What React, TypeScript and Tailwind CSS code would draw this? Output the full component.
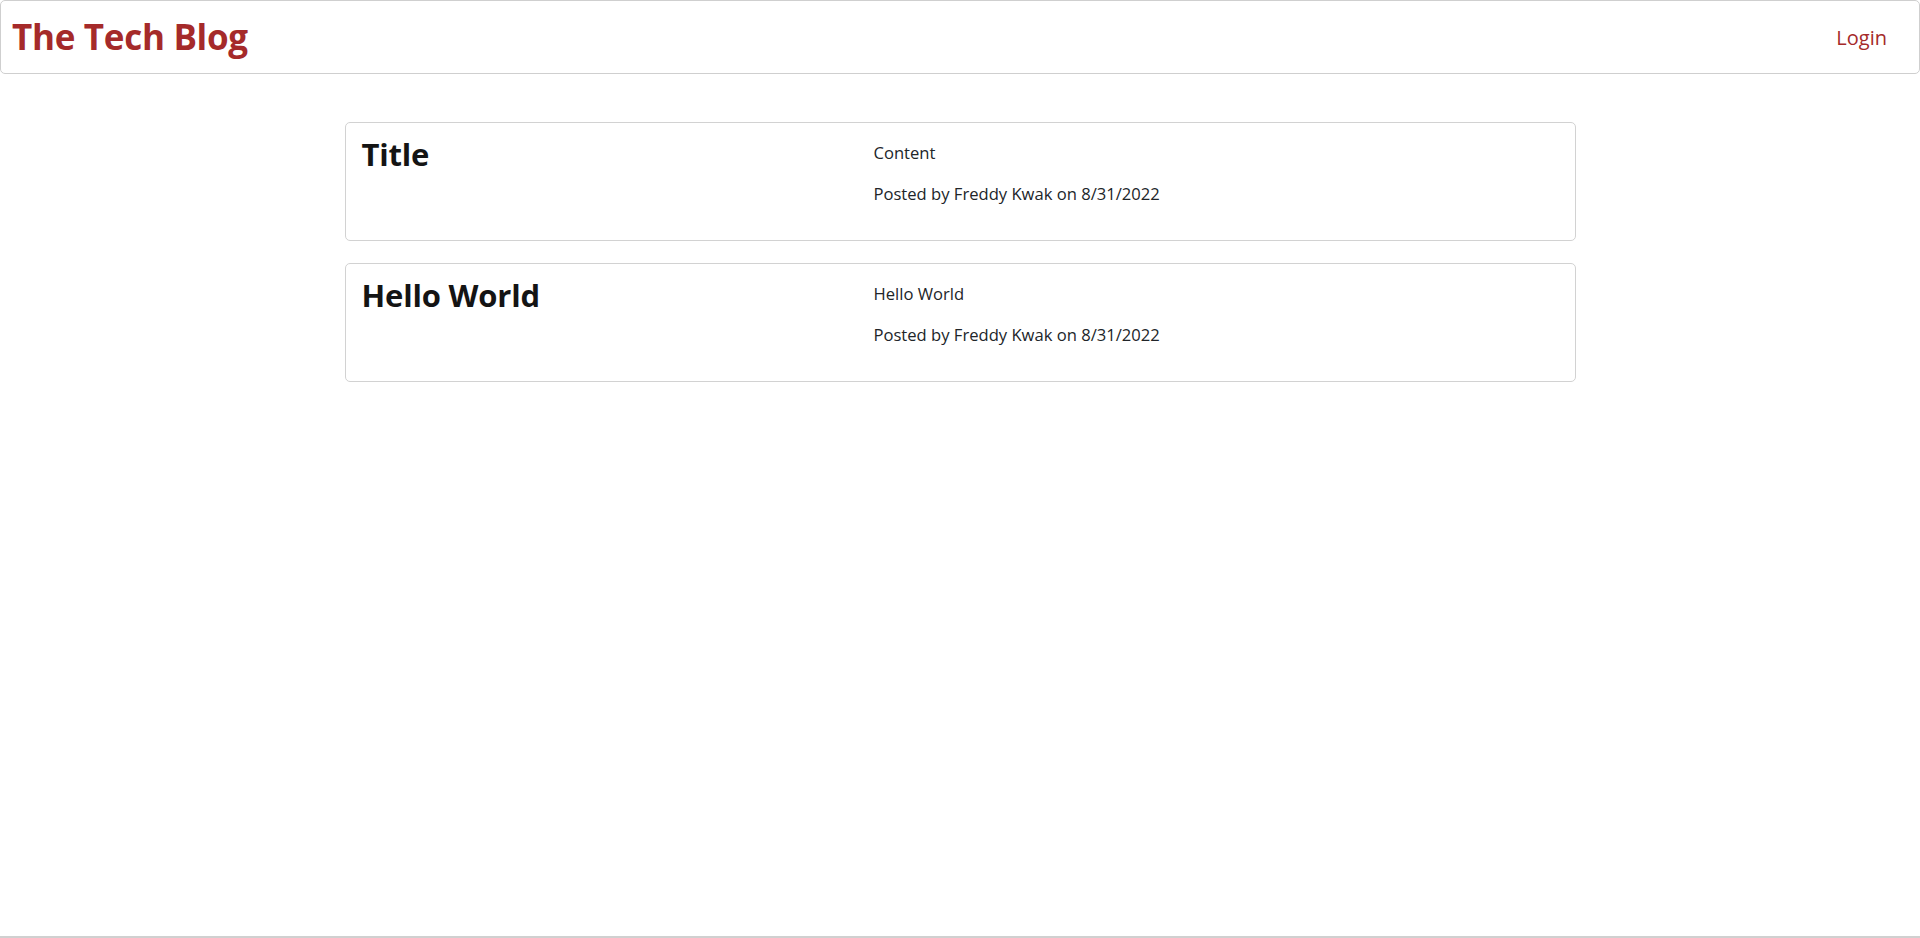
import React from "react";

const posts = [
  { title: "Title", content: "Content", author: "Freddy Kwak", date: "8/31/2022" },
  { title: "Hello World", content: "Hello World", author: "Freddy Kwak", date: "8/31/2022" },
];

export default function App() {
  return (
    <div className="flex h-[938px] flex-col bg-white text-[#212529]" style={{ fontFamily: '"Open Sans", "Noto Sans", sans-serif' }}>
      <header className="flex h-[74px] items-center justify-between rounded-[5px] border border-[#cfcfcf] pl-[11px] pr-[32px]">
        <h1 className="pb-[2px] text-[35px] font-bold leading-none tracking-[-0.3px] text-[#a52a2a]">The Tech Blog</h1>
        <a className="pt-[2px] text-[20px] font-medium text-[#a52a2a]">Login</a>
      </header>
      <main className="flex flex-1 flex-col items-center gap-[22px] pt-[48px]">
        {posts.map((p) => (
          <div key={p.title} className="flex h-[119px] w-[1231px] rounded-[5px] border border-[#d2d2d2] px-[16px] pt-[12px]">
            <h2 className="w-[512px] text-[31px] font-bold leading-[38px] tracking-[-0.2px] text-[#141414]">{p.title}</h2>
            <div className="flex flex-col gap-[17px] pt-[6px] text-[16.6px] leading-[24px]">
              <p>{p.content}</p>
              <p>
                Posted by {p.author} on {p.date}
              </p>
            </div>
          </div>
        ))}
      </main>
      <div className="h-[2px] w-full bg-[#d0d0d0]" />
    </div>
  );
}
